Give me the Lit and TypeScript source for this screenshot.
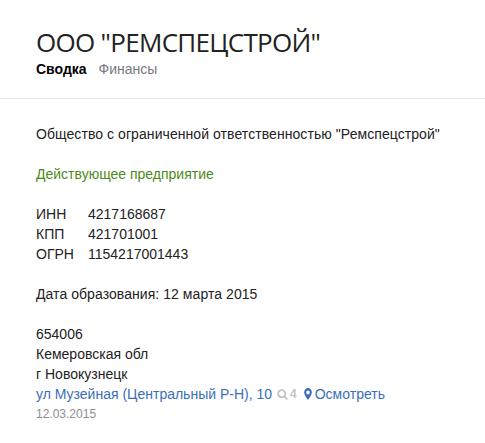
import { LitElement, html, css } from "lit";
import { customElement } from "lit/decorators.js";

@customElement("app-root")
export class AppRoot extends LitElement {
  static styles = css`
    :host { display: block; width: 485px; height: 443px; background: #fff; font-family: "Liberation Sans", Arial, sans-serif; font-size: 14px; line-height: 20px; color: #222; overflow: hidden; }
    .head { padding: 26px 36px 19px; border-bottom: 1px solid #e7e7e7; }
    h1 { margin: 0; font-family: "Open Sans", sans-serif; font-weight: 400; font-size: 26px; letter-spacing: -0.7px; line-height: 32px; color: #222; }
    .tabs { display: flex; gap: 12px; margin-top: 1px; }
    .tabs .on { font-weight: 700; color: #000; }
    .tabs .off { color: #777780; }
    .body { padding: 25px 36px 0; }
    p { margin: 0 0 20px; }
    .full { letter-spacing: 0.07px; }
    .since { letter-spacing: 0.06px; }
    .ok { color: #4d8a1c; }
    .ids { display: grid; grid-template-columns: 52px auto; justify-content: start; margin-bottom: 20px; }
    a { color: #3a6fb7; text-decoration: none; }
    .addr { display: flex; align-items: center; }
    .count { display: inline-flex; align-items: center; gap: 2px; margin-left: 5px; color: #c4c4c4; font-size: 12px; font-weight: 700; }
    .see { display: inline-flex; align-items: center; gap: 3px; margin-left: 7px; }
    .date { font-size: 12px; color: #8a8f96; line-height: 21px; }
    svg { display: block; }
  `;

  render() {
    return html`
      <div class="head">
        <h1>ООО "РЕМСПЕЦСТРОЙ"</h1>
        <div class="tabs"><span class="on">Сводка</span><span class="off">Финансы</span></div>
      </div>
      <div class="body">
        <p class="full">Общество с ограниченной ответственностью "Ремспецстрой"</p>
        <p class="ok">Действующее предприятие</p>
        <div class="ids">
          <span>ИНН</span><span>4217168687</span>
          <span>КПП</span><span>421701001</span>
          <span>ОГРН</span><span>1154217001443</span>
        </div>
        <p class="since">Дата образования: 12 марта 2015</p>
        <div>654006</div>
        <div>Кемеровская обл</div>
        <div>г Новокузнецк</div>
        <div class="addr">
          <a href="#">ул Музейная (Центральный Р-Н), 10</a>
          <span class="count">
            <svg width="11" height="11" viewBox="0 0 11 11" fill="none" stroke="#c4c4c4" stroke-width="1.9"><circle cx="4.7" cy="4.7" r="3.6"/><path d="M7 7l3.4 3.4"/></svg>
            4
          </span>
          <a class="see" href="#">
            <svg width="8" height="12" viewBox="0 0 10 13" preserveAspectRatio="none"><path fill="#3a6fb7" fill-rule="evenodd" d="M5 0a4.8 4.8 0 0 0-4.8 4.8C.2 7.6 5 13 5 13s4.8-5.4 4.8-8.2A4.8 4.8 0 0 0 5 0zm0 2.6a2.2 2.2 0 1 1 0 4.4 2.2 2.2 0 0 1 0-4.4z"/></svg>
            Осмотреть
          </a>
        </div>
        <div class="date">12.03.2015</div>
      </div>
    `;
  }
}
